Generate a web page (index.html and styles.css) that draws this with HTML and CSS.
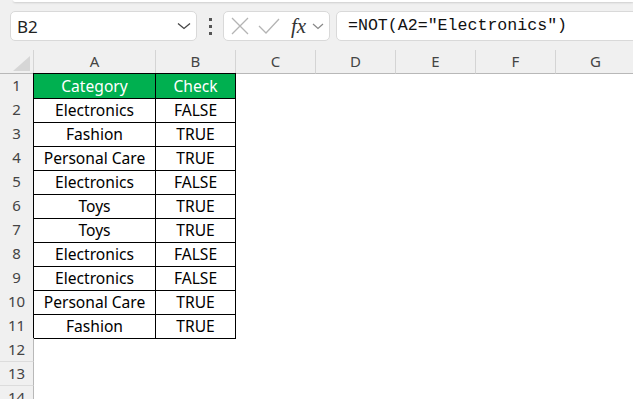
FILE: index.html
```html
<!DOCTYPE html>
<html lang="en">

<head>
  <meta charset="UTF-8">
  <title>Sheet</title>
  <link rel="stylesheet" href="styles.css">
</head>

<body>
  <div class="ribbon-edge"></div>
  <div class="formula-row">
    <div class="name-box">
      <span>B2</span>
      <svg class="chev" width="14" height="8" viewBox="0 0 14 8"><path d="M1 1.5 L7 6.5 L13 1.5" fill="none" stroke="#444" stroke-width="1.3"/></svg>
    </div>
    <div class="grip"><i></i><i></i><i></i></div>
    <div class="fx-box">
      <svg width="18" height="18" viewBox="0 0 18 18"><path d="M1 1 L17 17 M17 1 L1 17" stroke="#b4b4b4" stroke-width="1.3"/></svg>
      <svg width="22" height="16" viewBox="0 0 22 16"><path d="M1 8 L8 15 L21 1" fill="none" stroke="#b4b4b4" stroke-width="1.3"/></svg>
      <span class="fx">fx</span>
      <svg width="12" height="7" viewBox="0 0 12 7"><path d="M1 1 L6 5.5 L11 1" fill="none" stroke="#888" stroke-width="1.2"/></svg>
    </div>
    <div class="formula">=NOT(A2="Electronics")</div>
  </div>

  <div class="sheet">
    <div class="row colhead">
      <div class="corner"><svg width="17" height="15" viewBox="0 0 17 15"><polygon points="17,0 17,15 0,15" fill="#d6d6d6"/></svg></div>
      <div>A</div><div>B</div><div>C</div><div>D</div><div>E</div><div>F</div><div>G</div>
    </div>
    <div class="row"><div class="rh">1</div><div class="c t first head">Category</div><div class="c t head top">Check</div></div>
    <div class="row"><div class="rh">2</div><div class="c t first">Electronics</div><div class="c t">FALSE</div></div>
    <div class="row"><div class="rh">3</div><div class="c t first">Fashion</div><div class="c t">TRUE</div></div>
    <div class="row"><div class="rh">4</div><div class="c t first">Personal Care</div><div class="c t">TRUE</div></div>
    <div class="row"><div class="rh">5</div><div class="c t first">Electronics</div><div class="c t">FALSE</div></div>
    <div class="row"><div class="rh">6</div><div class="c t first">Toys</div><div class="c t">TRUE</div></div>
    <div class="row"><div class="rh">7</div><div class="c t first">Toys</div><div class="c t">TRUE</div></div>
    <div class="row"><div class="rh">8</div><div class="c t first">Electronics</div><div class="c t">FALSE</div></div>
    <div class="row"><div class="rh">9</div><div class="c t first">Electronics</div><div class="c t">FALSE</div></div>
    <div class="row"><div class="rh">10</div><div class="c t first">Personal Care</div><div class="c t">TRUE</div></div>
    <div class="row"><div class="rh">11</div><div class="c t first">Fashion</div><div class="c t">TRUE</div></div>
    <div class="row"><div class="rh">12</div></div>
    <div class="row"><div class="rh">13</div></div>
    <div class="row"><div class="rh">14</div></div>
  </div>
</body>

</html>
```

FILE: styles.css
```css
html,
body {
  height: 100%;
}

body {
  margin: 0;
  background-color: #f0f0f0;
  font-family: "Noto Sans", sans-serif;
  overflow: hidden;
  display: flex;
  flex-direction: column;
}

.ribbon-edge {
  flex: none;
  height: 2px;
  margin-left: 13px;
  background-color: #fff;
  border-bottom-left-radius: 6px;
  box-shadow: 0 1px 2px rgba(0, 0, 0, 0.15);
}

.formula-row {
  flex: none;
  display: flex;
  align-items: center;
  height: 48px;
  padding-left: 10px;
}

.name-box {
  box-sizing: border-box;
  width: 187px;
  height: 30px;
  background-color: #fff;
  border: 1px solid #d9d9d9;
  border-radius: 5px;
  display: flex;
  align-items: center;
  justify-content: space-between;
  padding: 0 5px 0 6px;
  font-size: 17px;
  color: #222;
}

.grip {
  width: 26px;
  display: flex;
  flex-direction: column;
  align-items: center;
  gap: 4px;
}

.grip i {
  width: 3px;
  height: 3px;
  background-color: #555;
}

.fx-box {
  box-sizing: border-box;
  width: 107px;
  height: 30px;
  background-color: #fff;
  border: 1px solid #d9d9d9;
  border-radius: 5px;
  display: flex;
  align-items: center;
  gap: 9px;
  padding-left: 7px;
}

.fx-box .fx {
  font-family: "Liberation Serif", serif;
  font-style: italic;
  font-size: 21px;
  color: #333;
  margin-left: 2px;
  margin-right: -3px;
  line-height: 1;
}

.formula {
  box-sizing: border-box;
  flex: 1;
  height: 30px;
  margin-left: 6px;
  margin-right: -8px;
  background-color: #fff;
  border: 1px solid #d9d9d9;
  border-radius: 5px;
  padding-left: 11px;
  font-family: "Liberation Mono", monospace;
  font-size: 16.6px;
  line-height: 28px;
  color: #111;
}

.sheet {
  flex: 1;
  min-height: 0;
  overflow: hidden;
  background-color: #fff;
}

.row {
  display: grid;
  grid-template-columns: 34px 122px 80px 80px 80px 80px 80px 80px;
  height: 24px;
}

.colhead {
  background-color: #f0f0f0;
}

.colhead div {
  box-sizing: border-box;
  border-right: 1px solid #d4d4d4;
  border-bottom: 1px solid #b8b8b8;
  text-align: center;
  font-size: 15px;
  line-height: 23px;
  color: #444;
}

.colhead .corner {
  display: flex;
  align-items: flex-end;
  justify-content: flex-end;
  padding: 0 3px 2px 0;
}

.rh {
  box-sizing: border-box;
  background-color: #f0f0f0;
  border-right: 1px solid #b8b8b8;
  border-bottom: 1px solid #dcdcdc;
  text-align: center;
  font-size: 15px;
  line-height: 23px;
  color: #444;
}

.c {
  box-sizing: border-box;
  text-align: center;
  font-size: 15.6px;
  line-height: 24px;
  color: #000;
  white-space: nowrap;
}

.t {
  border-right: 1px solid #000;
  border-bottom: 1px solid #000;
}

.t.first {
  box-shadow: -1px 0 0 #000;
}

.head {
  background-color: #00b050;
  color: #fff;
}

.head.first {
  box-shadow: -1px 0 0 #000, 0 -1px 0 #000, -1px -1px 0 #000;
}

.head.top {
  box-shadow: 0 -1px 0 #000;
}
```
